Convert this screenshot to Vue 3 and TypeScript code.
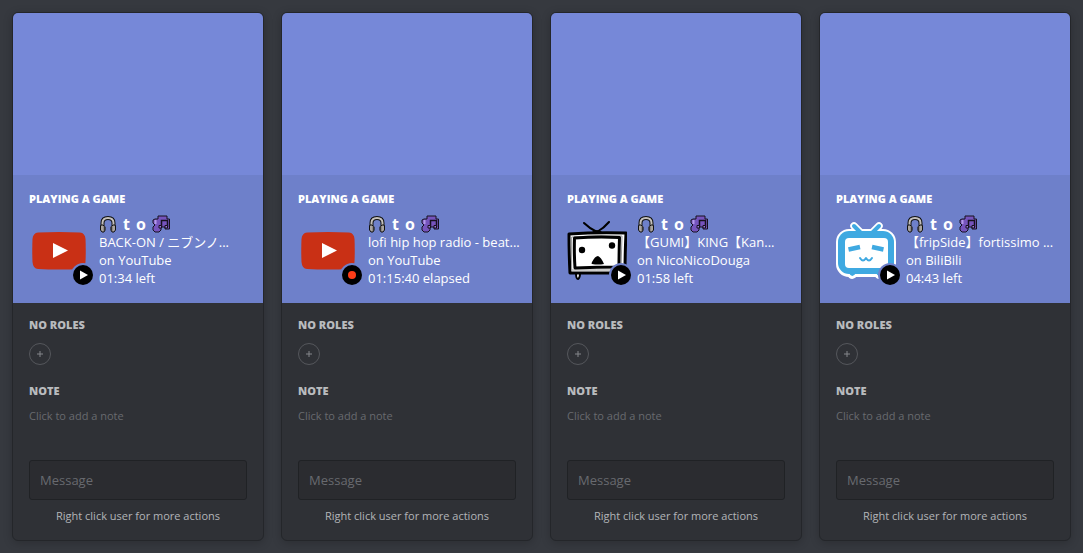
<script setup lang="ts">
type Logo = 'youtube' | 'niconico' | 'bilibili'

interface Activity {
  id: string
  logo: Logo
  live: boolean
  title: string
  site: string
  time: string
}

const activities: Activity[] = [
  { id: 'back-on', logo: 'youtube', live: false, title: 'BACK-ON / ニブンノ...', site: 'on YouTube', time: '01:34 left' },
  { id: 'lofi', logo: 'youtube', live: true, title: 'lofi hip hop radio - beat...', site: 'on YouTube', time: '01:15:40 elapsed' },
  { id: 'gumi', logo: 'niconico', live: false, title: '【GUMI】KING【Kan...', site: 'on NicoNicoDouga', time: '01:58 left' },
  { id: 'fripside', logo: 'bilibili', live: false, title: '【fripSide】fortissimo ...', site: 'on BiliBili', time: '04:43 left' },
]
</script>

<template>
  <main class="board">
    <article v-for="a in activities" :key="a.id" class="card">
      <header class="banner"></header>

      <section class="activity">
        <h2 class="heading">Playing a game</h2>
        <div class="activity-row">
          <div class="art">
            <svg v-if="a.logo === 'youtube'" class="logo" viewBox="0 0 60 60" aria-label="YouTube">
              <path d="M9 11.500Q30 10.500 51 11.500Q56 12 56.500 18Q57 30 56.500 41Q56 47.500 51 48Q30 49 9 48Q4 47.500 3.500 41Q3 30 3.500 18Q4 12 9 11.500Z" fill="#c93015" />
              <path d="M24 22V37L39 29.500Z" fill="#fff" />
            </svg>

            <svg v-else-if="a.logo === 'niconico'" class="logo" viewBox="0 0 60 60" aria-label="NicoNicoDouga">
              <g fill="none" stroke="#000" stroke-linecap="round" stroke-linejoin="round">
                <path d="M17 2Q22 7 30 11Q37 7 42 1" stroke-width="2" />
                <path d="M24 12Q30 7 36 12Z" fill="#000" stroke-width="1" />
                <path d="M9 52Q9 58 11 58Q13 57 13 52M46 53Q46 58 49 57L51 53" fill="#fff" stroke-width="2" />
                <path d="M2 13Q30 11 59 12Q58 33 58 52Q30 52 3 52Q2 33 2 13Z" fill="#fff" stroke-width="3" />
                <path d="M5 16Q30 14 55 15L54 49Q30 49 5 49Z" stroke="#999" stroke-width="1" />
                <path d="M7.500 17Q30 15.500 52.500 16.500Q52 33 52 46Q30 46 8 47Q7 33 7.500 17Z" fill="#fff" stroke-width="3" />
              </g>
              <circle cx="15" cy="29" r="3.200" />
              <circle cx="45" cy="24.500" r="3.200" />
              <path d="M25 43Q24 43 25 41Q28 35 31 35Q34 36 37 43Q31 44 25 43Z" />
            </svg>

            <svg v-else class="logo" viewBox="0 0 60 60" aria-label="BiliBili">
              <g stroke-linecap="round" stroke-linejoin="round">
                <g fill="#fff" stroke="#fff">
                  <path d="M18 5L26 13M43 5L35 13" stroke-width="7.500" />
                  <rect x="1" y="9" width="58" height="46" rx="12" stroke-width="2" />
                  <path d="M12 53Q16 60 21 53ZM39 53Q43 60 48 53Z" stroke-width="3" />
                </g>
                <path d="M18 5L26 13M43 5L35 13" stroke="#3fa9e1" stroke-width="4" />
                <path d="M13 52Q16 58 20 52ZM40 52Q43 58 47 52Z" fill="#3fa9e1" />
                <rect x="2" y="10" width="56" height="43" rx="11" fill="#3fa9e1" />
                <rect x="9" y="17" width="43" height="30" rx="4" fill="#fff" />
                <path d="M12.500 28.500L24 26M36 26L47.500 28.500" fill="none" stroke="#3fa9e1" stroke-width="4.500" stroke-linecap="butt" />
                <path d="M24 37Q27 42 30 37Q33 42 36 37" fill="none" stroke="#3fa9e1" stroke-width="2" />
              </g>
            </svg>

            <svg class="status" viewBox="0 0 24 24" :aria-label="a.live ? 'Live' : 'Playing'">
              <circle cx="12" cy="12" r="12" fill="#6e80ca" />
              <circle cx="12" cy="12" r="10" fill="#000" />
              <circle v-if="a.live" cx="12" cy="12" r="4" fill="#ff3d18" />
              <path v-else d="M9 7.500V16.500L17 12Z" fill="#fff" />
            </svg>
          </div>

          <div class="details">
            <h3 class="name">
              <svg class="emoji" viewBox="0 0 18 18" aria-hidden="true">
                <path d="M3.500 11V8Q3.500 3 9 3Q14.500 3 14.500 8V11" fill="none" stroke="#111" stroke-width="4" />
                <path d="M3.500 11V8Q3.500 3 9 3Q14.500 3 14.500 8V11" fill="none" stroke="#c4c0bc" stroke-width="2" />
                <path d="M2 10H4L6 12V15L5 17H3L1.500 15V11ZM16 10H14L12 12V15L13 17H15L16.500 15V11Z" fill="#aaa49f" stroke="#111" />
                <path d="M5.500 11V16M12.500 11V16" stroke="#383636" stroke-width="1.500" />
              </svg>
              <span>t</span>
              <span>o</span>
              <svg class="emoji" viewBox="0 0 18 18" aria-hidden="true">
                <path d="M6 1H15V4H17.500V14H13V12H9V15L7 17H3L1 15V12L3 10L1 8V5L3 4H6Z" fill="#7654bd" stroke="#16101f" />
                <path d="M3.500 5V9" stroke="#b49aea" stroke-width="2" />
                <path d="M9.500 12V5.500H15.500V12" fill="none" stroke="#16101f" stroke-width="1.500" />
                <path d="M7 10.500H9.500V13H7ZM13 10.500H15.500V13H13Z" fill="#9c79df" stroke="#16101f" />
              </svg>
            </h3>
            <p class="line">{{ a.title }}</p>
            <p class="line">{{ a.site }}</p>
            <p class="line">{{ a.time }}</p>
          </div>
        </div>
      </section>

      <section class="body">
        <h2 class="heading muted">No roles</h2>
        <button class="add" type="button" aria-label="Add role">
          <svg viewBox="0 0 8 8" aria-hidden="true"><path d="M4 1V7M1 4H7" stroke="#85878b" /></svg>
        </button>
        <h2 class="heading muted">Note</h2>
        <textarea class="note" rows="1" placeholder="Click to add a note" aria-label="Note"></textarea>
        <input class="message" type="text" placeholder="Message" aria-label="Message" />
        <p class="tip">Right click user for more actions</p>
      </section>
    </article>
  </main>
</template>

<style>
body {
  margin: 0;
  background: #36393f;
}
</style>

<style scoped>
.board {
  display: grid;
  grid-template-columns: repeat(4, minmax(0, 1fr));
  gap: 17px;
  padding: 12px;
  font-family: "Open Sans", "Noto Sans CJK JP", sans-serif;
  color: #fff;
}

.card {
  overflow: hidden;
  border: 1px solid #24262a;
  border-radius: 6px;
  background: #2f3136;
  box-shadow: 0 2px 10px rgba(0, 0, 0, 0.2);
}

.banner {
  height: 162px;
  background: #7688d8;
}

.activity {
  padding: 16px;
  background: #6e80ca;
}

.heading {
  margin: 0;
  font-size: 11px;
  line-height: 16px;
  font-weight: 800;
  text-transform: uppercase;
}

.muted {
  color: #b9bbbe;
}

.activity-row {
  display: flex;
  align-items: center;
  gap: 10px;
  padding-top: 8px;
}

.art {
  position: relative;
  flex: none;
  width: 60px;
  height: 60px;
}

.logo {
  display: block;
  width: 60px;
  height: 60px;
}

.status {
  position: absolute;
  right: -6px;
  bottom: -6px;
  width: 24px;
  height: 24px;
}

.details {
  flex: 1;
  min-width: 0;
}

.name {
  display: flex;
  align-items: center;
  gap: 6px;
  height: 18px;
  margin: 0;
  font-size: 16px;
  line-height: 18px;
  font-weight: 700;
}

.emoji {
  width: 18px;
  height: 18px;
}

.line {
  margin: 0;
  font-size: 13px;
  line-height: 18px;
  white-space: nowrap;
}

.body {
  padding: 14px 16px;
}

.add {
  display: flex;
  align-items: center;
  justify-content: center;
  width: 22px;
  height: 22px;
  margin: 10px 0 18px;
  padding: 0;
  border: 1px solid #55575c;
  border-radius: 50%;
  background: transparent;
}

.add svg {
  width: 8px;
  height: 8px;
}

.note {
  display: block;
  box-sizing: border-box;
  width: 100%;
  height: 36px;
  margin: 8px 0 17px;
  padding: 1px 0;
  border: 0;
  background: transparent;
  color: #b9bbbe;
  font: 11px/16px "Open Sans", sans-serif;
  resize: none;
}

.message {
  display: block;
  box-sizing: border-box;
  width: 100%;
  height: 40px;
  padding: 0 10px;
  border: 1px solid #202225;
  border-radius: 3px;
  background: #2b2c30;
  color: #dcddde;
  font: 13px/18px "Open Sans", sans-serif;
}

.note::placeholder,
.message::placeholder {
  color: #686a6f;
  opacity: 1;
}

.tip {
  margin: 8px 0 2px;
  font-size: 11px;
  line-height: 16px;
  text-align: center;
  color: #b3b5b8;
}
</style>
